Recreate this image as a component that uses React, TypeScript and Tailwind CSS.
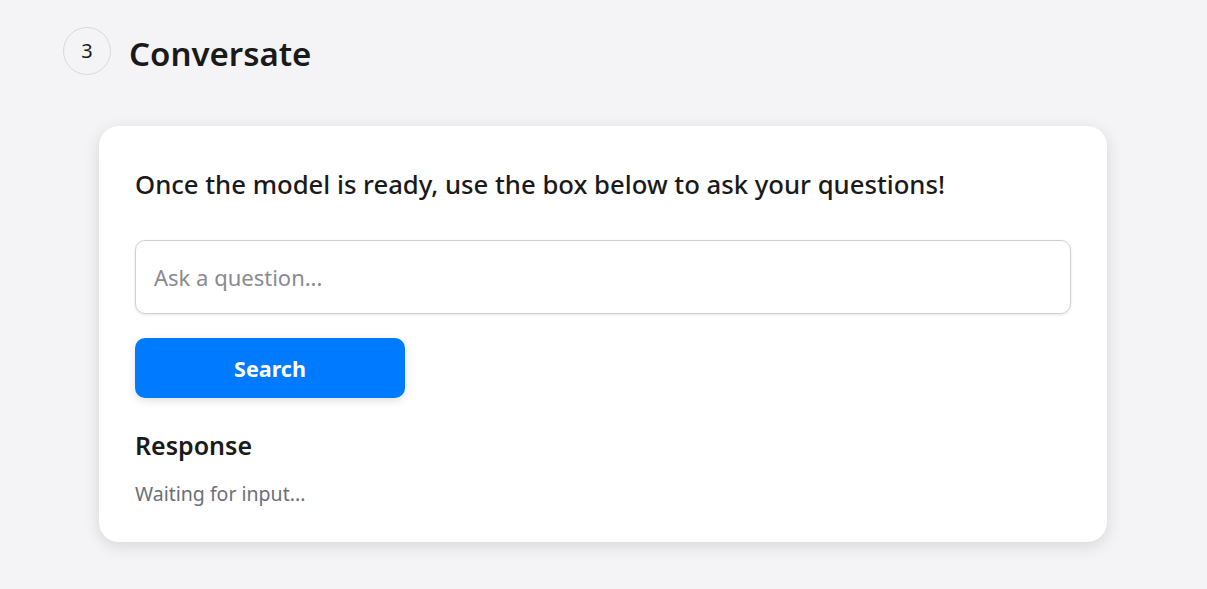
export default function App() {
  return (
    <div
      className="min-h-[589px] bg-[#f4f4f6] text-[#1a1a1a]"
      style={{ fontFamily: '"Noto Sans", "Open Sans", sans-serif' }}
    >
      <section className="pt-[27px]">
        <div className="flex items-center gap-[18px] pl-[63px]">
          <div className="flex h-[48px] w-[48px] items-center justify-center rounded-full border border-[#d9d9de] text-[20px] text-[#1a1a1a]">
            3
          </div>
          <h2 className="mt-[4px] text-[33px] font-semibold leading-none">Conversate</h2>
        </div>

        <div className="ml-[99px] mt-[51px] w-[1008px] rounded-[20px] bg-white px-[36px] pb-[34px] pt-[42px] shadow-[0_4px_16px_rgba(0,0,0,0.12)]">
          <p className="text-[25.7px] font-medium leading-[34px]">
            Once the model is ready, use the box below to ask your questions!
          </p>

          <input
            type="text"
            placeholder="Ask a question..."
            className="mt-[38px] block h-[74px] w-full rounded-[10px] border border-[#cfcfd8] px-[18px] text-[22px] shadow-[0_1px_3px_rgba(0,0,0,0.1)] outline-none placeholder:text-[#8a8a90]"
          />

          <button className="mt-[24px] h-[60px] w-[270px] rounded-[10px] bg-[#007bff] pt-[3px] text-[21.5px] font-bold text-white shadow-[0_3px_8px_rgba(0,0,0,0.12)]">
            Search
          </button>

          <h3 className="mt-[30px] text-[25px] font-semibold leading-[34px]">Response</h3>
          <p className="mt-[18px] text-[19.5px] leading-[28px] text-[#6c6f78]">Waiting for input...</p>
        </div>
      </section>
    </div>
  );
}
